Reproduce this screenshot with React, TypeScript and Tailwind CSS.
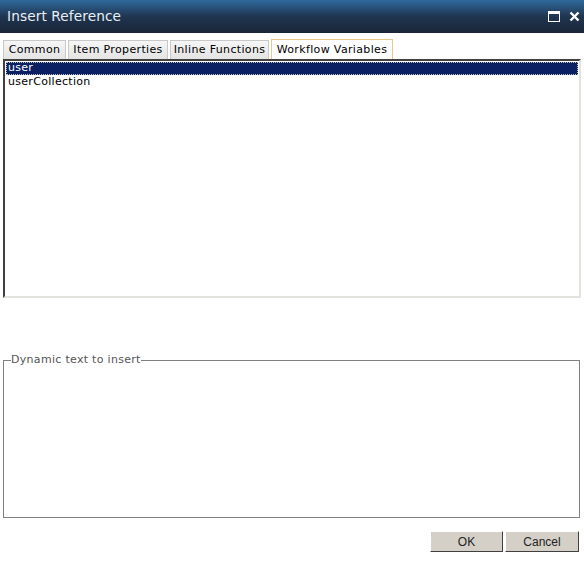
import { useState } from "react";

const tabs = [
  { label: "Common", w: "w-[63px]" },
  { label: "Item Properties", w: "w-[100px]" },
  { label: "Inline Functions", w: "w-[99px]" },
  { label: "Workflow Variables", w: "w-[122px]" },
];
const items = ["user", "userCollection"];

function TitleBar() {
  return (
    <div className="h-[33px] flex items-center justify-between bg-gradient-to-b from-[#2f6a9e] via-[#1f3550] to-[#1a2638] pl-[7px] pr-[4px]">
      <span className="text-[13.7px] text-[#e8eef4] font-['DejaVu_Sans',sans-serif] tracking-[0.1px]">
        Insert Reference
      </span>
      <div className="flex items-center gap-[9px]">
        <svg width="12" height="11" viewBox="0 0 12 11">
          <rect x="0.5" y="0.5" width="11" height="10" fill="none" stroke="#fff" />
          <rect x="0.5" y="0.5" width="11" height="2.5" fill="#fff" />
        </svg>
        <svg width="11" height="11" viewBox="0 0 11 11">
          <path d="M1.5 1.5 L9.5 9.5 M9.5 1.5 L1.5 9.5" stroke="#fff" strokeWidth="2.4" />
        </svg>
      </div>
    </div>
  );
}

export default function App() {
  const [active, setActive] = useState(3);
  const [selected, setSelected] = useState(0);

  return (
    <div className="w-[584px] h-[562px] bg-white font-['DejaVu_Sans',sans-serif] text-[11px] text-black overflow-hidden">
      <TitleBar />
      <div className="px-[3px] pt-[6px]">
        <div className="flex gap-[2px] items-end h-[20px] tracking-[0.35px]">
          {tabs.map((t, i) => (
            <button
              key={t.label}
              onClick={() => setActive(i)}
              className={
                i === active
                  ? `${t.w} h-[20px] bg-white border border-b-0 border-[#e8c98c] leading-[19px] text-center`
                  : `${t.w} h-[19px] bg-gradient-to-b from-[#f6f6f6] to-[#e3e3e3] border border-b-0 border-[#c8c8c8] leading-[18px] text-center`
              }
            >
              {t.label}
            </button>
          ))}
        </div>
        <div className="h-[239px] border-t-2 border-l-2 border-t-[#404040] border-l-[#404040] border-r-2 border-b-2 border-r-[#e4e2dc] border-b-[#e4e2dc] pt-[1px] px-[1px] tracking-[0.3px]">
          {items.map((it, i) => (
            <div
              key={it}
              onClick={() => setSelected(i)}
              className={
                i === selected
                  ? "h-[13px] leading-[12px] pl-[2px] bg-[#0a2062] text-white outline-1 outline-dotted outline-[#c0c0c0] -outline-offset-1"
                  : "h-[13px] leading-[13px] pl-[2px]"
              }
            >
              {it}
            </div>
          ))}
        </div>
        <fieldset className="mt-[56px] mr-[1px] h-[164px] border border-[#808080] px-[6px]">
          <legend className="text-[#555] px-0 ml-[1px] leading-[12px] tracking-[0.3px]">Dynamic text to insert</legend>
          <div className="h-full" />
        </fieldset>
        <div className="flex justify-end gap-[2px] mt-[13px] pr-[2px]">
          <button className="w-[73px] h-[21px] bg-[#d4d0c8] border border-t-white border-l-white border-r-[#404040] border-b-[#404040] font-['Liberation_Sans',sans-serif] text-[12px] text-[#222]">
            OK
          </button>
          <button className="w-[74px] h-[21px] bg-[#d4d0c8] border border-t-white border-l-white border-r-[#404040] border-b-[#404040] font-['Liberation_Sans',sans-serif] text-[12px] text-[#222]">
            Cancel
          </button>
        </div>
      </div>
    </div>
  );
}
